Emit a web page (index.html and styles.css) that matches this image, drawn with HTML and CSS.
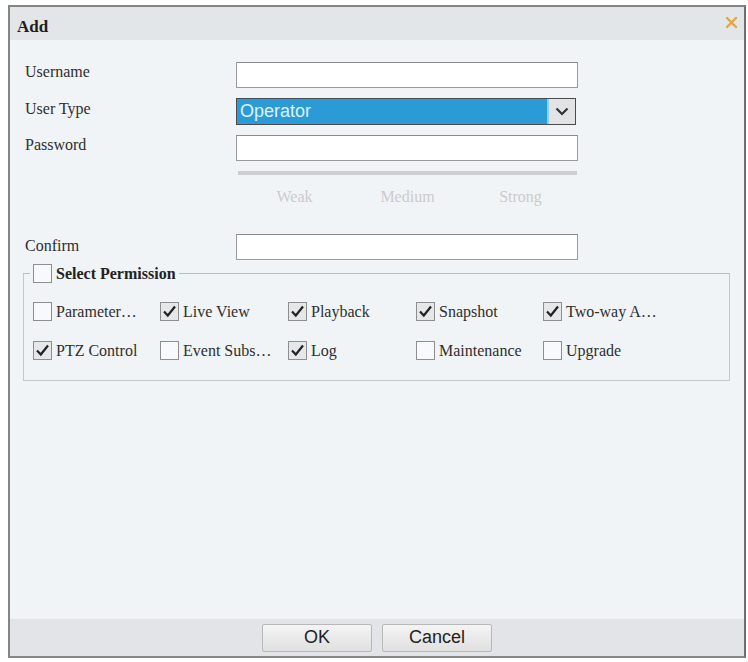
FILE: index.html
```html
<!DOCTYPE html>
<html>
<head>
<meta charset="utf-8">
<title>Add</title>
<link rel="stylesheet" href="styles.css">
</head>
<body>
<div class="dialog">
  <div class="titlebar">
    <span class="title">Add</span>
    <svg class="close" width="11" height="11" viewBox="0 0 11 11"><path d="M1 1 L10 10 M10 1 L1 10" stroke="#e3a645" stroke-width="2.4" stroke-linecap="round"/></svg>
  </div>
  <div class="content">
    <div class="row">
      <label class="lbl">Username</label>
      <input class="field" type="text">
    </div>
    <div class="row">
      <label class="lbl">User Type</label>
      <div class="select">
        <span class="select-value">Operator</span>
        <span class="select-arrow"><svg width="14" height="9" viewBox="0 0 14 9"><path d="M1.5 1.5 L7 7 L12.5 1.5" fill="none" stroke="#333" stroke-width="2.2"/></svg></span>
      </div>
    </div>
    <div class="row">
      <label class="lbl">Password</label>
      <input class="field" type="password">
    </div>
    <div class="strength">
      <div class="strength-bar"></div>
      <div class="strength-labels"><span>Weak</span><span>Medium</span><span>Strong</span></div>
    </div>
    <div class="row row-confirm">
      <label class="lbl">Confirm</label>
      <input class="field" type="password">
    </div>
    <fieldset class="perm">
      <legend class="perm-legend"><span class="cb"></span><span class="perm-title">Select Permission</span></legend>
      <div class="perm-grid">
        <div class="perm-item"><span class="cb"></span><span>Parameter…</span></div>
        <div class="perm-item"><span class="cb cb-on"><svg width="17" height="17" viewBox="0 0 17 17"><path d="M3 8.5 L6.8 12.5 L14 3.5" fill="none" stroke="#222" stroke-width="2.2"/></svg></span><span>Live View</span></div>
        <div class="perm-item"><span class="cb cb-on"><svg width="17" height="17" viewBox="0 0 17 17"><path d="M3 8.5 L6.8 12.5 L14 3.5" fill="none" stroke="#222" stroke-width="2.2"/></svg></span><span>Playback</span></div>
        <div class="perm-item"><span class="cb cb-on"><svg width="17" height="17" viewBox="0 0 17 17"><path d="M3 8.5 L6.8 12.5 L14 3.5" fill="none" stroke="#222" stroke-width="2.2"/></svg></span><span>Snapshot</span></div>
        <div class="perm-item"><span class="cb cb-on"><svg width="17" height="17" viewBox="0 0 17 17"><path d="M3 8.5 L6.8 12.5 L14 3.5" fill="none" stroke="#222" stroke-width="2.2"/></svg></span><span>Two-way A…</span></div>
        <div class="perm-item"><span class="cb cb-on"><svg width="17" height="17" viewBox="0 0 17 17"><path d="M3 8.5 L6.8 12.5 L14 3.5" fill="none" stroke="#222" stroke-width="2.2"/></svg></span><span>PTZ Control</span></div>
        <div class="perm-item"><span class="cb"></span><span>Event Subs…</span></div>
        <div class="perm-item"><span class="cb cb-on"><svg width="17" height="17" viewBox="0 0 17 17"><path d="M3 8.5 L6.8 12.5 L14 3.5" fill="none" stroke="#222" stroke-width="2.2"/></svg></span><span>Log</span></div>
        <div class="perm-item"><span class="cb"></span><span>Maintenance</span></div>
        <div class="perm-item"><span class="cb"></span><span>Upgrade</span></div>
      </div>
    </fieldset>
  </div>
  <div class="footer">
    <button class="btn">OK</button>
    <button class="btn">Cancel</button>
  </div>
</div>
</body>
</html>
```

FILE: styles.css
```css
html, body {
  margin: 0;
  padding: 0;
  background: #ffffff;
}
body {
  font-family: "Liberation Serif", "Times New Roman", serif;
  color: #333;
}
.dialog {
  box-sizing: border-box;
  margin: 5px 0 0 8px;
  width: 738px;
  height: 653px;
  border: 2px solid #858585;
  border-right-color: #6f6f6f;
  background: #f1f4f7;
  display: flex;
  flex-direction: column;
}
.titlebar {
  height: 33px;
  flex: none;
  background: #e3e6e9;
  display: flex;
  align-items: center;
  justify-content: space-between;
  padding: 0 7px 0 7px;
}
.title {
  font-weight: bold;
  font-size: 17px;
  color: #1e1e1e;
  margin-top: 6px;
}
.close {
  display: block;
  margin-top: -2px;
}
.content {
  flex: 1;
  padding: 22px 0 0 13px;
}
.row {
  display: flex;
  align-items: center;
  margin-bottom: 10px;
}
.lbl {
  width: 213px;
  flex: none;
  font-family: "Liberation Serif", "Times New Roman", serif;
  font-size: 16px;
  line-height: 20px;
  padding-left: 2px;
  box-sizing: border-box;
  margin-bottom: 6px;
  color: #2e2e2e;
}
.field {
  box-sizing: border-box;
  width: 342px;
  height: 26px;
  margin: 0;
  border: 1px solid #9a9a9a;
  border-top-color: #8a8a8a;
  background: #fff;
  outline: none;
}
.select {
  box-sizing: border-box;
  width: 340px;
  height: 27px;
  border: 1px solid #4b4b4b;
  display: flex;
  background: #2b9bd7;
}
.select-value {
  flex: 1;
  font-family: "Liberation Sans", Arial, sans-serif;
  font-size: 18px;
  line-height: 24px;
  color: #dff3ff;
  padding-left: 3px;
}
.select-arrow {
  width: 26px;
  flex: none;
  background: #e2e3e4;
  border-left: 2px solid #8fd0f0;
  display: flex;
  align-items: center;
  justify-content: center;
}
.select-arrow svg {
  display: block;
}
.strength {
  margin: 2px 0 0 215px;
  width: 339px;
}
.strength-bar {
  height: 4px;
  background: #cdd0d3;
}
.strength-labels {
  display: flex;
  margin-top: 12px;
}
.strength-labels span {
  flex: 1;
  text-align: center;
  font-size: 16px;
  line-height: 20px;
  color: #cbcbcb;
}
.row-confirm {
  margin-top: 27px;
  margin-bottom: 0;
}
.row-confirm .lbl {
  margin-bottom: 3px;
}
.perm {
  box-sizing: border-box;
  width: 707px;
  margin: 4px 0 0 0;
  padding: 19px 0 20px 9px;
  border: 1px solid #c4c7cb;
  border-top-color: #b9bcc0;
  min-width: 0;
}
.perm-legend {
  padding: 0 3px;
  margin-left: -3px;
  display: flex;
  align-items: center;
  gap: 4px;
  height: 19px;
}
.perm-title {
  font-weight: bold;
  font-size: 16px;
  line-height: 19px;
  color: #222;
}
.cb {
  box-sizing: border-box;
  width: 19px;
  height: 19px;
  flex: none;
  border: 1px solid #8e8e8e;
  background: #f8f9fa;
  display: flex;
  align-items: center;
  justify-content: center;
}
.cb-on {
  background: #e6e7e8;
}
.cb svg {
  display: block;
}
.perm-grid {
  display: grid;
  grid-template-columns: 127px 128px 128px 127px 1fr;
  row-gap: 20px;
}
.perm-item {
  display: flex;
  align-items: center;
  gap: 4px;
  font-size: 16px;
  line-height: 19px;
  color: #2e2e2e;
  white-space: nowrap;
}
.footer {
  height: 37px;
  flex: none;
  background: #e2e4e7;
  display: flex;
  align-items: center;
  justify-content: center;
  gap: 10px;
}
.btn {
  box-sizing: border-box;
  width: 110px;
  height: 28px;
  margin: 0;
  padding: 0;
  border: 1px solid #b8b8b8;
  border-radius: 2px;
  background: linear-gradient(#f4f4f4, #e0e0e0);
  font-family: "Liberation Sans", Arial, sans-serif;
  font-size: 18px;
  color: #222;
}
```
